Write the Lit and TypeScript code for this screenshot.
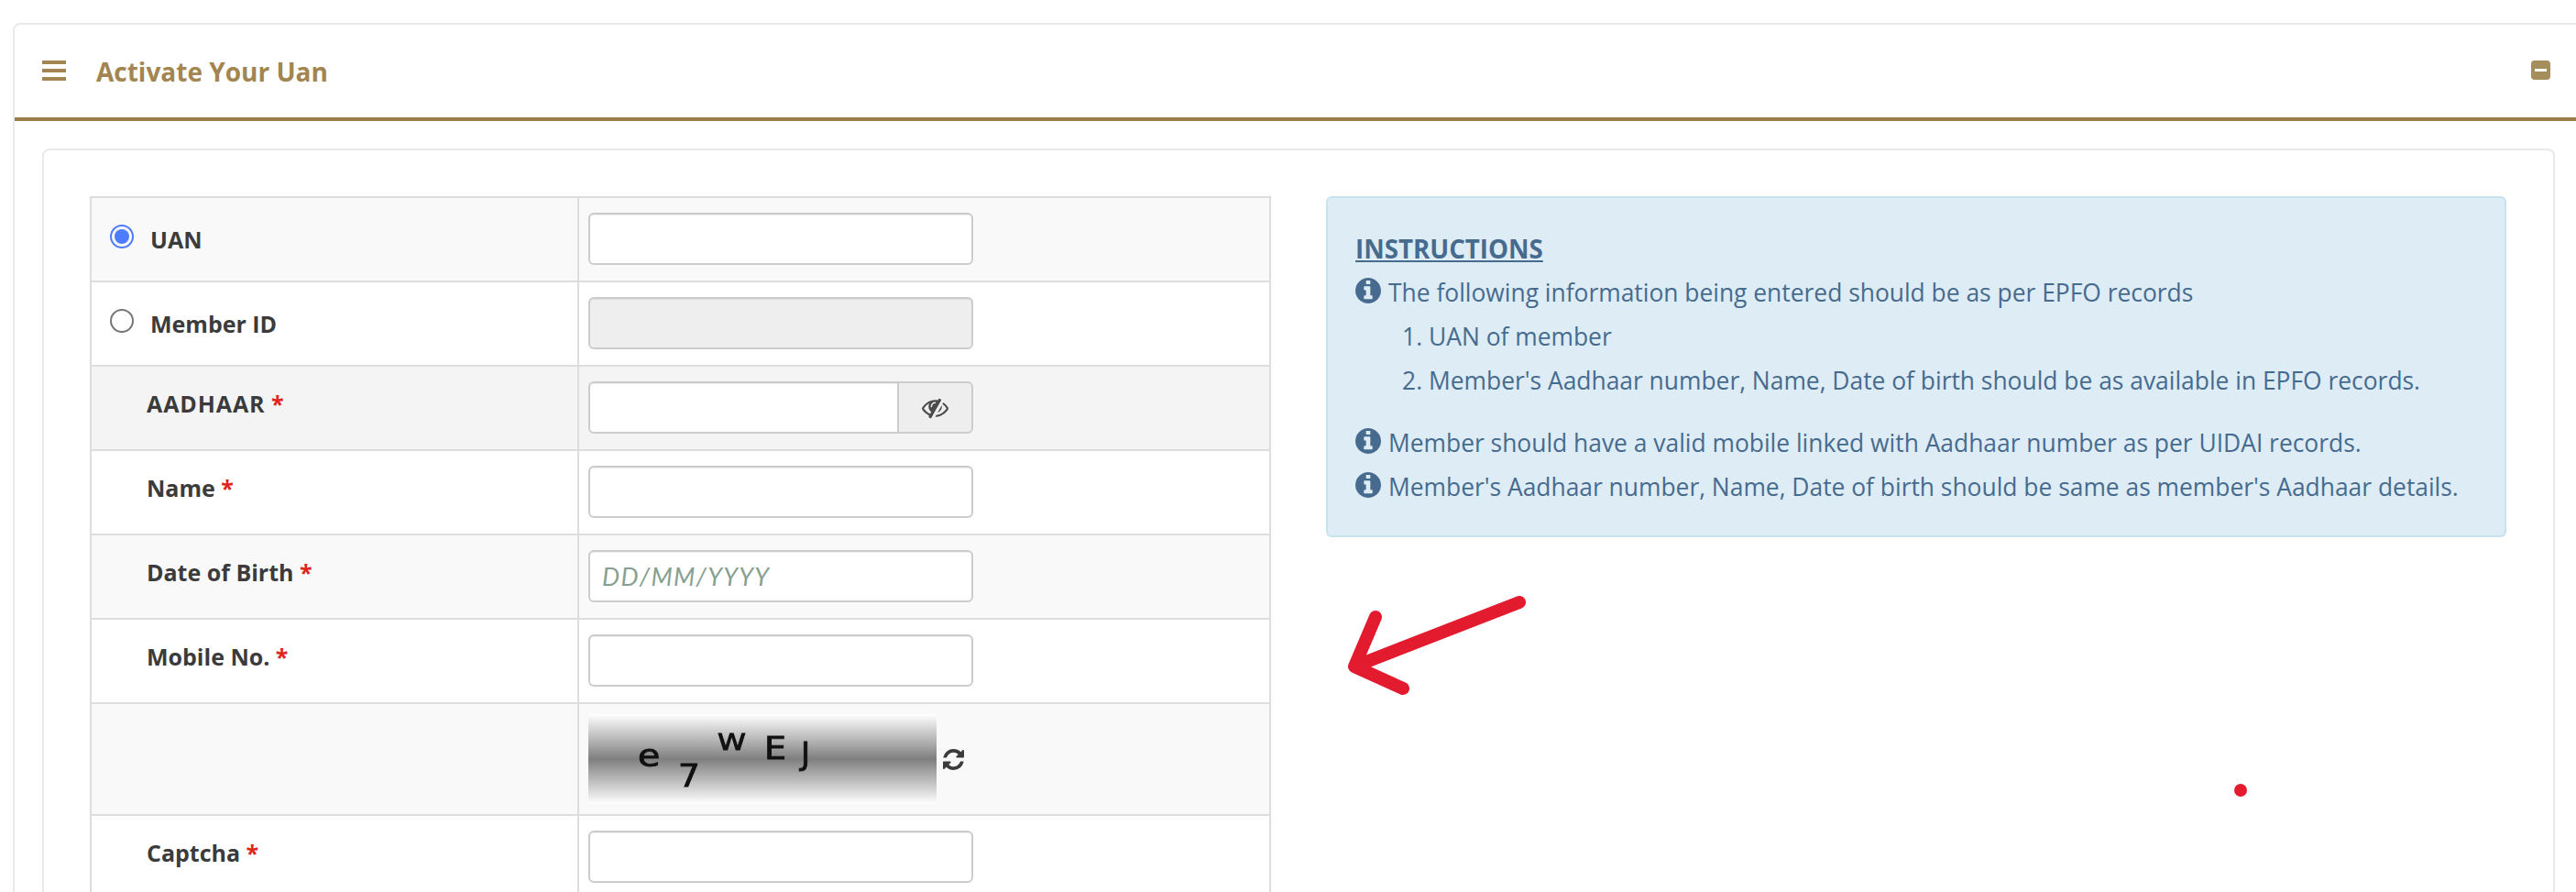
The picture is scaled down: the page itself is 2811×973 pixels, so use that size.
import { LitElement, html, css, svg } from 'lit';
import { customElement } from 'lit/decorators.js';

const BODY_FONT = css`"Open Sans", "Noto Sans", sans-serif`;

const INFO_PATH = 'M1152 1376v-160q0-14-9-23t-23-9h-96v-512q0-14-9-23t-23-9h-320q-14 0-23 9t-9 23v160q0 14 9 23t23 9h96v320h-96q-14 0-23 9t-9 23v160q0 14 9 23t23 9h448q14 0 23-9t9-23zm-128-896v-160q0-14-9-23t-23-9h-192q-14 0-23 9t-9 23v160q0 14 9 23t23 9h192q14 0 23-9t9-23zm640 416q0 209-103 385.5t-279.5 279.5-385.5 103-385.5-103-279.5-279.5-103-385.5 103-385.5 279.5-279.5 385.5-103 385.5 103 279.5 279.5 103 385.5z';
const REFRESH_PATH = 'M1639 1056q0 5-1 7-64 268-268 434.5t-478 166.5q-146 0-282.5-55t-243.5-157l-129 129q-19 19-45 19t-45-19-19-45v-448q0-26 19-45t45-19h448q26 0 45 19t19 45-19 45l-137 137q71 66 161 102t187 36q134 0 250-65t186-179q11-17 53-117 8-23 30-23h192q13 0 22.5 9.5t9.5 22.5zm25-800v448q0 26-19 45t-45 19h-448q-26 0-45-19t-19-45 19-45l138-138q-148-137-349-137-134 0-250 65t-186 179q-11 17-53 117-8 23-30 23h-199q-13 0-22.5-9.5t-9.5-22.5v-7q65-268 270-434.5t480-166.5q146 0 284 55.5t245 156.5l130-129q19-19 45-19t45 19 19 45z';
const EYE_SLASH_PATH = 'M555 1335l78-141q-87-63-136-159t-49-203q0-121 61-225-229 117-381 353 167 258 427 375zm389-759q0-20-14-34t-34-14q-125 0-214.5 89.5t-89.5 214.5q0 20 14 34t34 14 34-14 14-34q0-86 61-147t147-61q20 0 34-14t14-34zm363-191q0 7-1 9-105 188-315 566t-316 567l-49 89q-10 16-28 16-12 0-134-70-16-10-16-28 0-12 44-87-143-65-263.5-173t-208.5-245q-20-31-20-69t20-69q153-235 380-371t496-136q89 0 180 17l54-97q10-16 28-16 5 0 18 6t31 15.5 33 18.5 31.5 18.5 19.5 11.5q16 10 16 27zm37 447q0 139-79 253.5t-209 164.5l280-502q8 45 8 84zm448 128q0 35-20 69-39 64-109 145-150 172-347.5 267t-419.5 95l74-132q212-18 392.5-137t301.5-307q-115-179-282-294l63-112q95 64 182.5 153t144.5 184q20 34 20 69z';

const icon = (path: string, cls: string, box = '128 128 1536 1536') => html`
  <svg class=${cls} viewBox=${box} fill="currentColor">${svg`<path d=${path}></path>`}</svg>
`;

@customElement('app-root')
export class AppRoot extends LitElement {
  static styles = css`
    :host {
      display: block;
      position: relative;
      height: 973px;
      overflow: hidden;
      background: #fff;
      font-family: ${BODY_FONT};
      color: #3b3b3b;
    }

    .panel {
      width: 2900px;
      margin: 25px 0 0 14px;
      border: 2px solid #e9e9e9;
      border-radius: 8px;
      background: #fff;
    }

    .panel-head {
      display: flex;
      align-items: center;
      width: 2795px;
      box-sizing: border-box;
      height: 101px;
      padding: 0 28px 0 30px;
      color: #a28550;
    }

    .panel-rule {
      height: 4px;
      background: #9b7e49;
    }

    .bars {
      display: flex;
      flex-direction: column;
      justify-content: space-between;
      width: 26px;
      height: 22px;
      margin-top: -1px;
    }

    .bars i {
      display: block;
      height: 4px;
      background: #a28550;
    }

    .title {
      margin: 1px 0 0 33px;
      font-size: 28px;
      font-weight: 700;
      flex: 1;
    }

    .collapse {
      display: flex;
      align-items: center;
      justify-content: center;
      width: 21px;
      height: 21px;
      margin-top: -2px;
      border-radius: 4px;
      background: #a68d5c;
    }

    .collapse i {
      display: block;
      width: 13px;
      height: 3px;
      background: #fff;
    }

    .card {
      width: 2742px;
      box-sizing: border-box;
      margin: 30px 0 0 30px;
      padding: 50px;
      border: 2px solid #e9e9e9;
      border-radius: 8px;
      display: grid;
      grid-template-columns: 1289px 1288px;
      column-gap: 60px;
      align-items: start;
    }

    table {
      width: 1289px;
      border-collapse: collapse;
      table-layout: fixed;
    }

    col.label-col {
      width: 532px;
    }

    td {
      height: 92px;
      padding: 0;
      border: 2px solid #ddd;
      box-sizing: border-box;
    }

    tr.odd td {
      background: #f9f9f9;
    }

    tr.hover td {
      background: #f4f4f4;
    }

    tr.tall td {
      height: 122px;
    }

    .label {
      padding-left: 60px;
      padding-bottom: 10px;
      font-size: 25px;
      font-weight: 700;
    }

    .wide {
      letter-spacing: 0.9px;
    }

    .req {
      color: #e2231a;
      font-weight: 700;
    }

    .radio-label {
      display: flex;
      align-items: center;
      padding-left: 20px;
      font-size: 25px;
      font-weight: 700;
    }

    .radio {
      width: 26px;
      height: 26px;
      box-sizing: border-box;
      margin: -6px 18px 0 0;
      border: 2px solid #767676;
      border-radius: 50%;
      background: #fff;
    }

    .radio.on {
      border-color: #4d7cfe;
      padding: 3px;
      background: #4d7cfe content-box;
    }

    .field {
      margin-top: -1px;
      padding-left: 10px;
    }

    input {
      display: block;
      box-sizing: border-box;
      width: 420px;
      height: 57px;
      padding: 0 13px;
      border: 2px solid #ccc;
      border-radius: 6px;
      background: #fff;
      box-shadow: inset 0 1px 1px rgba(0, 0, 0, 0.075);
      font: italic 27px Lato, sans-serif;
      letter-spacing: 1.3px;
      outline: none;
    }

    input::placeholder {
      color: #87a08f;
    }

    input:disabled {
      background: #eee;
    }

    .group {
      display: flex;
      width: 420px;
    }

    .group input {
      width: 339px;
      border-radius: 6px 0 0 6px;
    }

    .addon {
      display: flex;
      align-items: center;
      justify-content: center;
      flex: 1;
      box-sizing: border-box;
      border: 2px solid #ccc;
      border-left: 0;
      border-radius: 0 6px 6px 0;
      background: #eee;
      color: #4a4a4a;
    }

    .eye {
      width: 29px;
      height: 29px;
    }

    .captcha-cell {
      display: flex;
      align-items: center;
      padding-left: 10px;
    }

    .captcha {
      position: relative;
      width: 380px;
      height: 98px;
      background: linear-gradient(#fff 0%, #7f7f7f 50%, #fff 100%);
      overflow: hidden;
    }

    .captcha span {
      position: absolute;
      font-family: "DejaVu Sans", sans-serif;
      color: #111;
      -webkit-text-stroke: 0.9px #111;
      line-height: 1;
      filter: blur(0.5px);
      transform-origin: left top;
    }

    .refresh {
      width: 23px;
      height: 23px;
      margin-left: 7px;
      color: #3b3b3b;
    }

    .alert {
      box-sizing: border-box;
      height: 372px;
      padding: 31px 30px 0;
      border: 2px solid #c6e3ee;
      border-radius: 6px;
      background: #deecf5;
      color: #466b8e;
      font-size: 26.4px;
      line-height: 48px;
    }

    .alert h4 {
      margin: 0;
      font-size: 27.7px;
      font-weight: 700;
      text-decoration: underline;
    }

    .note {
      display: flex;
      align-items: center;
      gap: 8px;
    }

    .info {
      width: 28px;
      height: 28px;
      margin-top: -4px;
    }

    .alert ol {
      margin: 0 0 20px;
      padding-left: 80px;
    }

    .arrow {
      position: absolute;
      left: 1460px;
      top: 640px;
      width: 215px;
      height: 130px;
    }

    .dot {
      position: absolute;
      left: 2438px;
      top: 855px;
      width: 14px;
      height: 14px;
      border-radius: 50%;
      background: #e31b2f;
    }
  `;

  private labelRow(cls: string, label: string) {
    return html`
      <tr class=${cls}>
        <td><div class="label">${label} <span class="req">*</span></div></td>
        <td><div class="field"><input type="text" /></div></td>
      </tr>
    `;
  }

  render() {
    return html`
      <div class="panel">
        <div class="panel-head">
          <div class="bars"><i></i><i></i><i></i></div>
          <div class="title">Activate Your Uan</div>
          <div class="collapse"><i></i></div>
        </div>
        <div class="panel-rule"></div>
        <div class="card">
          <table>
            <colgroup><col class="label-col" /><col /></colgroup>
            <tbody>
              <tr class="odd">
                <td><div class="radio-label"><span class="radio on"></span>UAN</div></td>
                <td><div class="field"><input type="text" /></div></td>
              </tr>
              <tr>
                <td><div class="radio-label"><span class="radio"></span>Member ID</div></td>
                <td><div class="field"><input type="text" disabled /></div></td>
              </tr>
              <tr class="hover">
                <td><div class="label"><span class="wide">AADHAAR</span> <span class="req">*</span></div></td>
                <td>
                  <div class="field">
                    <div class="group">
                      <input type="text" />
                      <div class="addon">${icon(EYE_SLASH_PATH, 'eye', '0 0 1792 1792')}</div>
                    </div>
                  </div>
                </td>
              </tr>
              ${this.labelRow('', 'Name')}
              <tr class="odd">
                <td><div class="label">Date of Birth <span class="req">*</span></div></td>
                <td><div class="field"><input type="text" placeholder="DD/MM/YYYY" /></div></td>
              </tr>
              ${this.labelRow('', 'Mobile No.')}
              <tr class="odd tall">
                <td></td>
                <td>
                  <div class="captcha-cell">
                    <div class="captcha">
                      <span style="left:54px;top:29px;font-size:33px;transform:scaleX(1.2)">e</span>
                      <span style="left:98px;top:50px;font-size:34px;transform:scaleX(1.1)">7</span>
                      <span style="left:141px;top:19px;font-size:24px;transform:scaleX(1.3)">W</span>
                      <span style="left:192px;top:21px;font-size:33px;transform:scaleX(1.15)">E</span>
                      <span style="left:232px;top:26px;font-size:34px;">J</span>
                    </div>
                    ${icon(REFRESH_PATH, 'refresh')}
                  </div>
                </td>
              </tr>
              ${this.labelRow('', 'Captcha')}
            </tbody>
          </table>

          <div class="alert">
            <h4>INSTRUCTIONS</h4>
            <div class="note">
              ${icon(INFO_PATH, 'info')}
              <span>The following information being entered should be as per EPFO records</span>
            </div>
            <ol>
              <li>UAN of member</li>
              <li>Member's Aadhaar number, Name, Date of birth should be as available in EPFO records.</li>
            </ol>
            <div class="note">
              ${icon(INFO_PATH, 'info')}
              <span>Member should have a valid mobile linked with Aadhaar number as per UIDAI records.</span>
            </div>
            <div class="note">
              ${icon(INFO_PATH, 'info')}
              <span>Member's Aadhaar number, Name, Date of birth should be same as member's Aadhaar details.</span>
            </div>
          </div>
        </div>
      </div>

      <svg class="arrow" viewBox="1460 640 215 130" fill="none" stroke="#e31b2f" stroke-width="14" stroke-linecap="round" stroke-linejoin="round">
        <path d="M1658 657 L1478 727 M1501 673 L1478 727 L1531 751"></path>
      </svg>
      <div class="dot"></div>
    `;
  }
}
